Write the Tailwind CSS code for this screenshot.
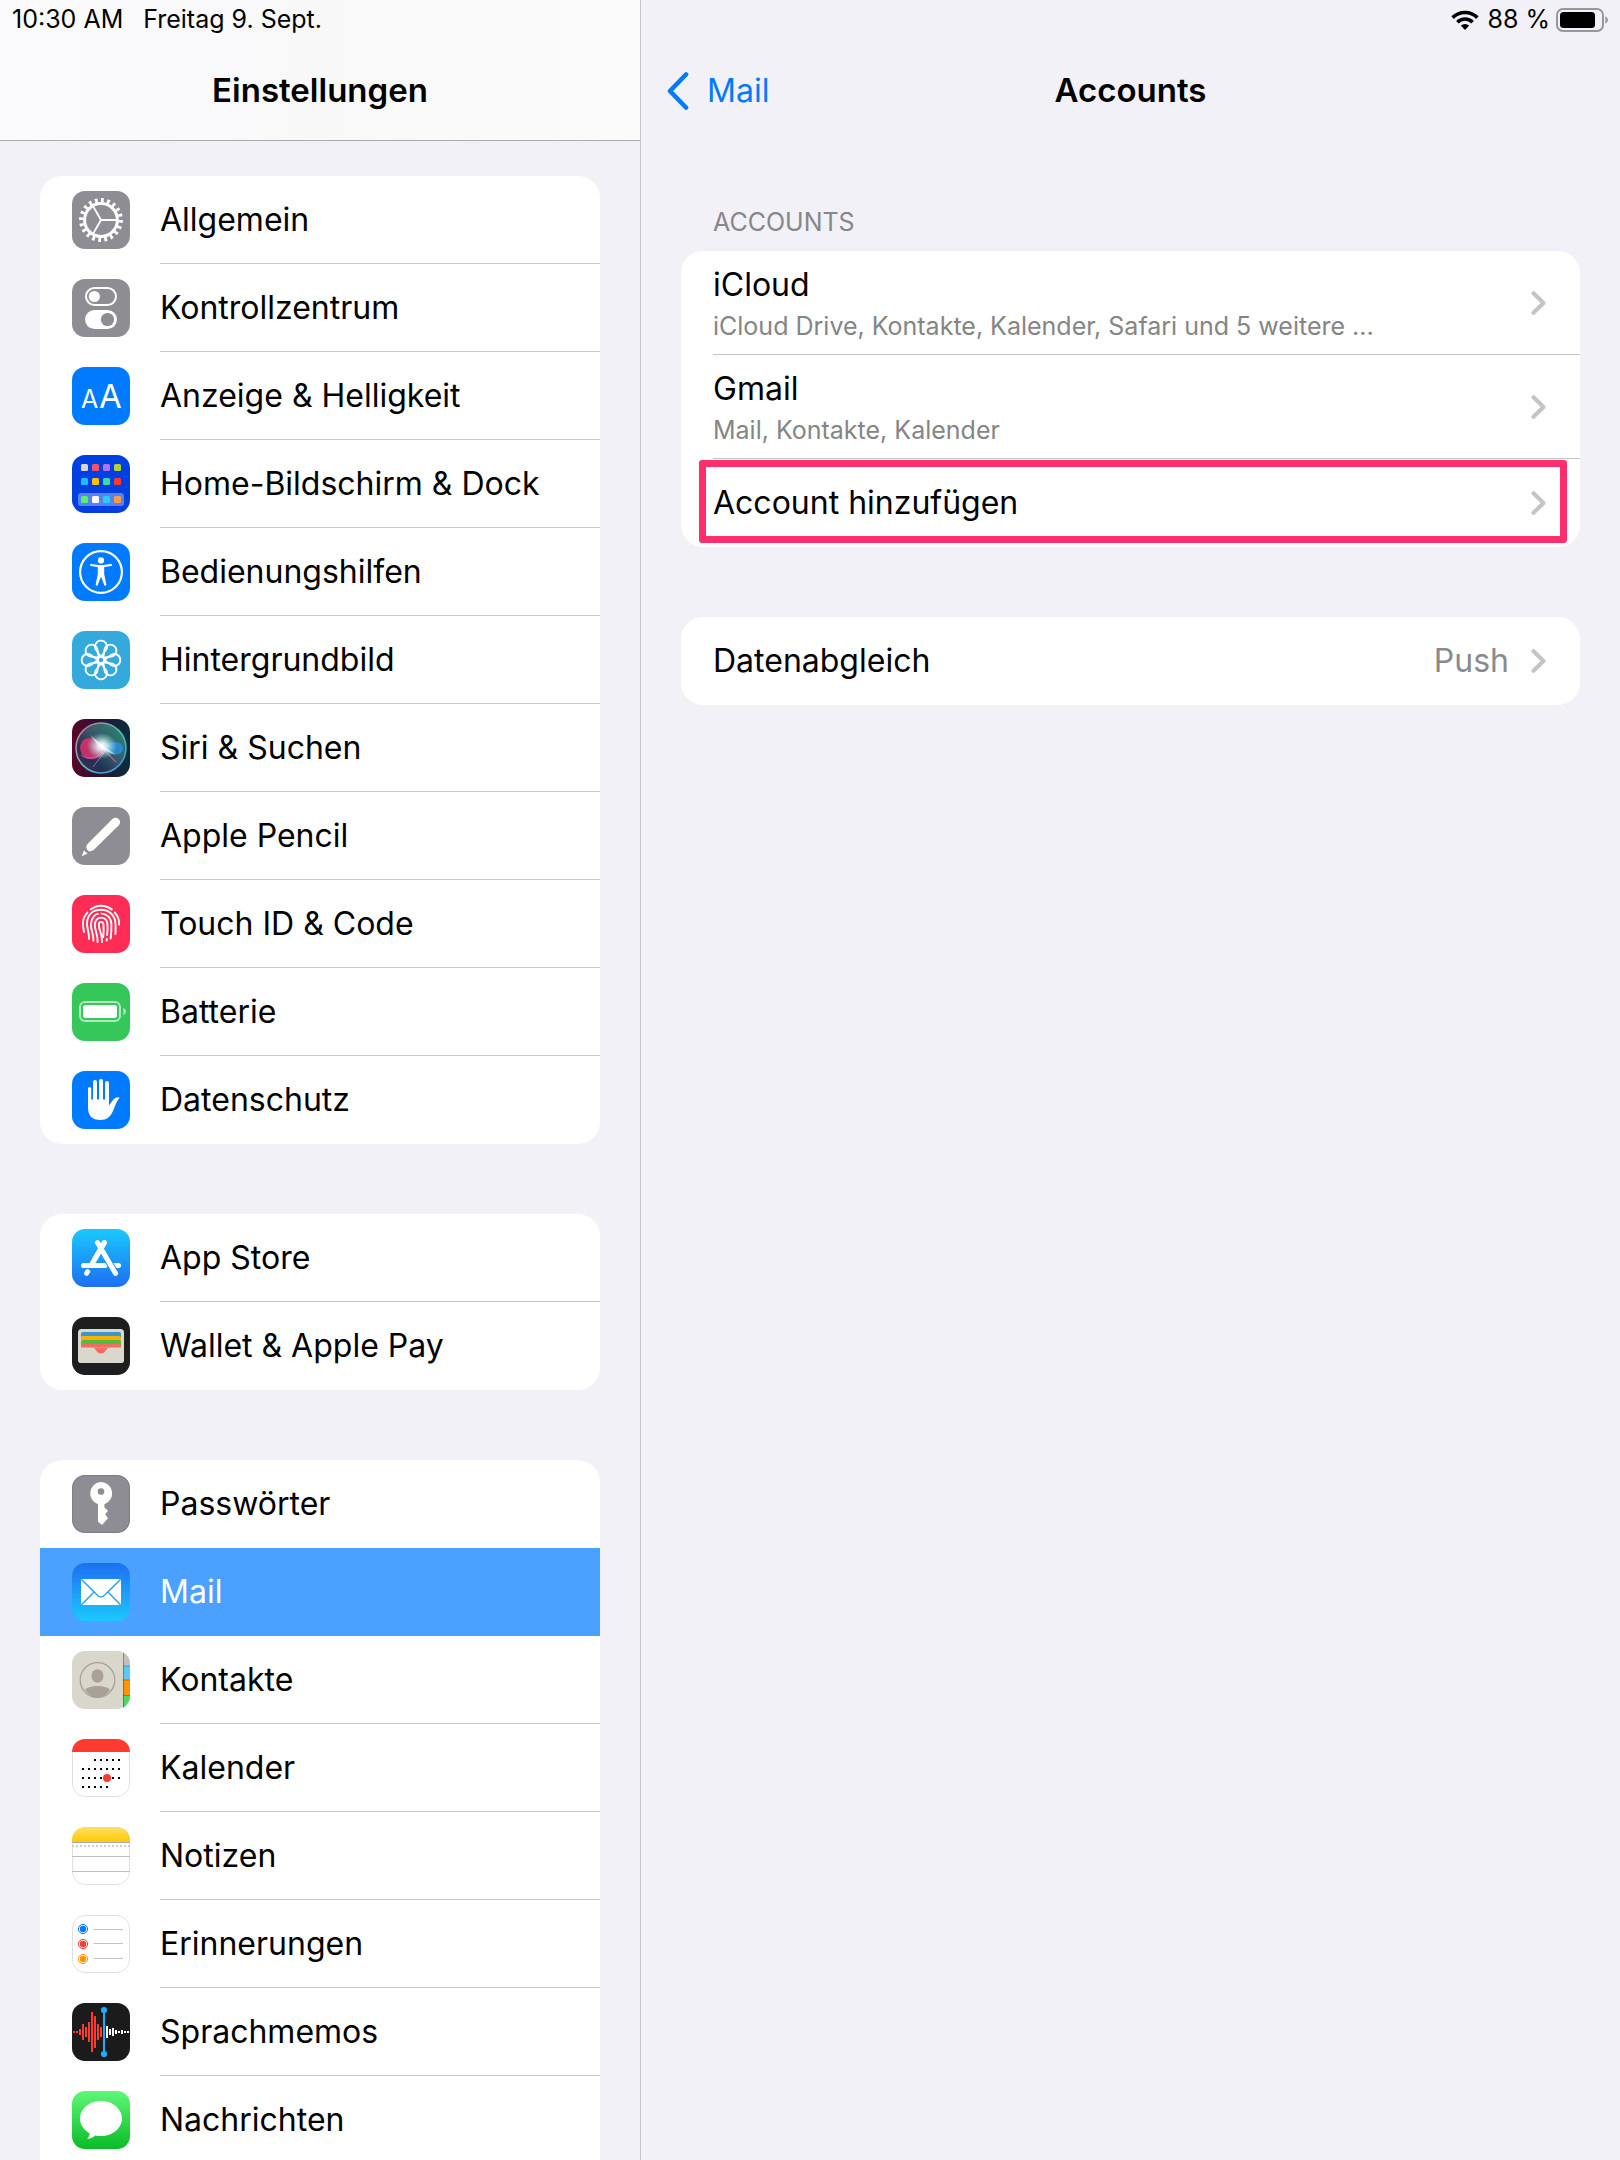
<!DOCTYPE html>
<html lang="de">

<head>
    <meta charset="UTF-8">
    <meta name="viewport" content="width=device-width, initial-scale=1.0">
    <script src="https://cdn.jsdelivr.net/npm/@tailwindcss/browser@4"></script>
    <title>Einstellungen</title>
</head>

<body class="bg-[#f2f1f7] text-black font-[Inter,'Liberation_Sans',sans-serif]">
    <div class="flex h-screen overflow-hidden">

        <!-- sidebar -->
        <aside class="flex flex-col w-2/5 max-w-[641px] border-r border-[#c6c5ca]">
            <header class="shrink-0 h-[141px] border-b border-[#a9a9ae] bg-linear-to-r from-[#fbfbfd] via-[#f8f8f9] to-[#fbfbfb]">
                <div class="flex items-center gap-5 h-10 px-3 text-[25px]">
                    <span>10:30 AM</span>
                    <span>Freitag 9. Sept.</span>
                </div>
                <h1 class="h-[100px] leading-[100px] text-center text-[33px] font-semibold">Einstellungen</h1>
            </header>
            <nav id="menu" class="flex-1 overflow-y-auto [scrollbar-width:none] px-10 pt-[35px] space-y-[70px]"></nav>
        </aside>

        <!-- detail -->
        <main class="flex-1 min-w-0">
            <div class="flex items-center justify-end gap-2 h-10 pr-3 text-[25px]">
                <svg class="w-7 h-5" viewBox="0 0 28 20" fill="none" stroke="#000" stroke-width="3.6">
                    <path d="M1.6 7.6A17.6 17.6 0 0 1 26.4 7.6" />
                    <path d="M6.4 12.2A10.8 10.8 0 0 1 21.6 12.2" />
                    <path d="M14 20L9.8 15.6A6 6 0 0 1 18.2 15.6Z" fill="#000" stroke="none" />
                </svg>
                <div class="flex items-center gap-1.5">
                    <span>88 %</span>
                    <svg class="w-[52px] h-6" viewBox="0 0 52 24" fill="none">
                        <rect x="1" y="1" width="46" height="22" rx="6" stroke="#98979c" stroke-width="2" />
                        <rect x="4" y="4" width="35" height="16" rx="3.5" fill="#000" />
                        <path d="M49.3 8.2Q52 9.5 52 12T49.3 15.8Z" fill="#98979c" />
                    </svg>
                </div>
            </div>
            <div class="grid grid-cols-[1fr_auto_1fr] items-center h-[102px] px-[26px]">
                <a href="#" class="flex items-center gap-[18px] text-[32px] text-[#007aff]">
                    <svg class="w-[22px] h-10" viewBox="0 0 22 40" fill="none" stroke="#007aff" stroke-width="4.6" stroke-linecap="round" stroke-linejoin="round">
                        <path d="M19 3.5L3 20L19 36.5" />
                    </svg>
                    Mail
                </a>
                <h2 class="text-[33px] font-semibold">Accounts</h2>
            </div>

            <section class="px-10 pt-[60px]">
                <h3 class="pl-8 h-[49px] leading-10 text-[25px] text-[#86868b]">ACCOUNTS</h3>
                <ul id="accounts" class="bg-white rounded-[22px]"></ul>
                <ul class="bg-white rounded-[22px] mt-[70px]">
                    <li>
                        <a href="#" class="flex items-center h-[88px] leading-[88px] pl-8 pr-[34px] text-[32px]">
                            <span class="flex-1">Datenabgleich</span>
                            <span class="text-[#8a8a8e] mr-[22px]">Push</span>
                            <svg class="w-[15px] h-6" viewBox="0 0 15 24" fill="none" stroke="#c4c4c6" stroke-width="4" stroke-linecap="round" stroke-linejoin="round">
                                <path d="M2.5 2.2L12.5 12L2.5 21.8" />
                            </svg>
                        </a>
                    </li>
                </ul>
            </section>
        </main>
    </div>

    <script>
        // every icon is drawn on a 58x58 tile
        const icons = {
            allgemein: `<rect width="58" height="58" fill="#8e8d93"/>
                <g fill="none" stroke="#fff">
                    <circle cx="29" cy="29" r="16.4" stroke-width="3"/>
                    <circle cx="29" cy="29" r="19.6" stroke-width="4.6" pathLength="80" stroke-dasharray="1.8 2.2"/>
                    <path d="M45 29H29L21 15.1M29 29L21 42.9" stroke-width="1.9"/>
                </g>`,
            kontroll: `<rect width="58" height="58" fill="#8e8d93"/>
                <rect x="14" y="9" width="30" height="17" rx="8.5" fill="none" stroke="#fff" stroke-width="2"/>
                <circle cx="22.3" cy="17.5" r="5.6" fill="#fff"/>
                <rect x="13" y="31" width="32" height="19" rx="9.5" fill="#fff"/>
                <circle cx="35.5" cy="40.5" r="6.6" fill="#8e8d93"/>`,
            anzeige: `<rect width="58" height="58" fill="#007aff"/>
                <text x="9" y="41" font-size="25" fill="#fff">A</text>
                <text x="27" y="41" font-size="33" fill="#fff">A</text>`,
            home: `<rect width="58" height="58" fill="#0040e0"/>
                <rect x="6" y="38" width="46" height="13" rx="3" fill="#fff" fill-opacity=".35"/>
                <rect x="9" y="9" width="7" height="7" rx="1.5" fill="#d9d6d0"/><rect x="20" y="9" width="7" height="7" rx="1.5" fill="#ff4f63"/>
                <rect x="31" y="9" width="7" height="7" rx="1.5" fill="#b76fff"/><rect x="42" y="9" width="7" height="7" rx="1.5" fill="#b2d235"/>
                <rect x="9" y="23" width="7" height="7" rx="1.5" fill="#1cbcff"/><rect x="20" y="23" width="7" height="7" rx="1.5" fill="#ffc200"/>
                <rect x="31" y="23" width="7" height="7" rx="1.5" fill="#3ddba6"/><rect x="42" y="23" width="7" height="7" rx="1.5" fill="#ff3830"/>
                <rect x="9" y="41" width="7" height="7" rx="1.5" fill="#55f26f"/><rect x="20" y="41" width="7" height="7" rx="1.5" fill="#fff"/>
                <rect x="31" y="41" width="7" height="7" rx="1.5" fill="#1fd0ff"/><rect x="42" y="41" width="7" height="7" rx="1.5" fill="#ff9b42"/>`,
            bedienung: `<rect width="58" height="58" fill="#007aff"/>
                <circle cx="29" cy="29" r="20.9" fill="none" stroke="#fff" stroke-width="2.2"/>
                <circle cx="29" cy="17.4" r="3.1" fill="#fff"/>
                <path d="M19 22L26.5 23.2H31.5L39 22" fill="none" stroke="#fff" stroke-width="2.2" stroke-linecap="round" stroke-linejoin="round"/>
                <path d="M25.8 23H32.2V31L34.4 41.8Q33.6 43.4 32.4 42.4L29.4 34.5H28.6L25.6 42.4Q24.4 43.4 23.6 41.8L25.8 31Z" fill="#fff"/>`,
            hintergrund: `<rect width="58" height="58" fill="#34aadc"/>
                <g fill="none" stroke="#fff" stroke-width="1.8" stroke-linejoin="round">
                    <circle cx="29" cy="29" r="3.2"/>
                    ${[0, 45, 90, 135, 180, 225, 270, 315].map(a => `<path transform="rotate(${a} 29 29)" d="M29 25.8L23.7 18.5A6 6 0 1 1 34.3 18.5Z"/>`).join('')}
                </g>`,
            siri: `<defs>
                    <linearGradient id="s1"><stop stop-color="#5c0526"/><stop offset=".45" stop-color="#2b1236"/><stop offset="1" stop-color="#062f3c"/></linearGradient>
                    <linearGradient id="s2" x1="1" y1="0" x2="0" y2="1"><stop stop-color="#2fae86"/><stop offset=".45" stop-color="#3b6f7c"/><stop offset=".7" stop-color="#1d3a5c"/><stop offset="1" stop-color="#4d2a6e"/></linearGradient>
                    <linearGradient id="s3" x1="0" y1="0" x2="1" y2="1"><stop stop-color="#e0668c"/><stop offset=".5" stop-color="#54c4ae"/><stop offset="1" stop-color="#3f83d8"/></linearGradient>
                    <radialGradient id="s4"><stop stop-color="#fff"/><stop offset=".3" stop-color="#e9fbff" stop-opacity=".85"/><stop offset="1" stop-color="#9fe" stop-opacity="0"/></radialGradient>
                </defs>
                <rect width="58" height="58" fill="url(#s1)"/>
                <circle cx="29" cy="29" r="25" fill="url(#s2)" fill-opacity=".75" stroke="url(#s3)" stroke-width="1.6"/>
                <path d="M8 29C9 16 24 15 34 31C28 44 9 43 8 29Z" fill="#e8326f" fill-opacity=".8"/>
                <path d="M9 36C16 42 26 39 34 31L21 48" fill="none" stroke="#b58be0" stroke-width="1" stroke-opacity=".7"/>
                <path d="M30 30C36 22 48 20 51 28C52 38 38 37 30 30Z" fill="#2b8fe8" fill-opacity=".8"/>
                <path d="M32 31L44 43" stroke="#e76a8f" stroke-width="1.4" stroke-opacity=".7"/>
                <ellipse cx="30" cy="27" rx="15" ry="13" fill="url(#s4)"/>
                <path d="M18 16L31.5 27L44 36L29 30Z" fill="#fff" fill-opacity=".6"/>`,
            pencil: `<rect width="58" height="58" fill="#8e8d93"/>
                <path d="M40.4 12.1A4.4 4.4 0 0 1 46.8 18.3L22.2 42.6Q20.5 44.3 17.6 44.6Q14.6 43.2 14.2 40.6Q14.4 38.2 16 36.5Z" fill="#fff"/>
                <path d="M9.8 49.3L12 43.3Q13.2 45.4 15.6 46.4Z" fill="#fff"/>`,
            touch: `<rect width="58" height="58" fill="#ff2d55"/>
                <g fill="none" stroke="#fff" stroke-width="1.9" stroke-linecap="round">
                    <path d="M18.6 14.4Q29 7.2 39.8 14.4M15.4 17.6C9.4 24 10.8 31 12 37M42.8 17.6C46.4 21.6 47.4 26 47.1 29.6"/>
                    <path d="M17 44C17.4 37 14.4 33 15 27C16 18.6 22 14.8 29 14.8C37 14.8 43.2 20 43.5 29C43.8 33 43.5 36 43.4 39"/>
                    <path d="M21.4 45.8C21.8 39 18.6 35 18.9 29C19.3 22.4 24 18.7 26 18.9M29.5 18.6C35 18.8 39.2 22.8 39.4 29C39.6 35 39.2 39 38.6 43.6"/>
                    <path d="M25.6 47C26 40 22.8 35 22.8 30C22.8 25.6 25.5 22.6 29 22.6C32.9 22.6 35.4 25.6 35.5 30C35.8 35 35.4 38 35.1 40M34.8 44L34.6 45.6"/>
                    <path d="M30 47C30.6 39 26.8 35 26.8 30C26.8 25.8 31.4 25.8 31.5 30C31.8 35 31.6 39 31.2 42"/>
                </g>`,
            batterie: `<rect width="58" height="58" fill="#35c759"/>
                <rect x="8" y="19" width="40" height="19" rx="5" fill="none" stroke="#fff" stroke-opacity=".6" stroke-width="2"/>
                <rect x="11" y="22" width="34" height="13" rx="2.5" fill="#fff"/>
                <path d="M51.3 24.8Q54 26 54 28.5T51.3 32.2Z" fill="#fff" fill-opacity=".6"/>`,
            datenschutz: `<rect width="58" height="58" fill="#007aff"/>
                <g stroke="#fff" stroke-linecap="round">
                    <path d="M17.6 17.5V36" stroke-width="3.2"/>
                    <path d="M23 11V34M29 10V34M35 12V34" stroke-width="4"/>
                </g>
                <path d="M16 28.5H37V34.5L40.5 29.5Q43.5 25.6 47.3 26.4Q47.6 27 46.6 28Q44.6 30.4 43 35L41 40Q37.5 49 28.5 49Q16 49 16 36.5Z" fill="#fff"/>`,
            appstore: `<defs><linearGradient id="as" x2="0" y2="1"><stop stop-color="#1bc9fd"/><stop offset="1" stop-color="#1d6ff2"/></linearGradient></defs>
                <rect width="58" height="58" fill="url(#as)"/>
                <g fill="none" stroke="#fff" stroke-width="5" stroke-linecap="round">
                    <path d="M11.5 36.5H33M42 36.5H46.5"/>
                    <path d="M32.4 13.6L19.6 35.5M15.6 42.6L14.6 44.4"/>
                </g>
                <path d="M25.4 13.6L43.6 44.4" stroke="#1e97f8" stroke-width="7" stroke-dasharray="20 30" stroke-dashoffset="-12"/>
                <path d="M25.4 13.6L43.6 44.4M32.4 13.6L22.6 30.4" stroke="#fff" stroke-width="5" stroke-linecap="round"/>`,
            wallet: `<rect width="58" height="58" fill="#1e1e1e"/>
                <rect x="6" y="12" width="46" height="34" rx="3.5" fill="#dad7cc"/>
                <path d="M9 31V17Q9 15 11 15H47Q49 15 49 17V31Z" fill="#3a99c9"/>
                <path d="M9 31V21Q9 19 11 19H47Q49 19 49 21V31Z" fill="#ffb003"/>
                <path d="M9 31V25Q9 23 11 23H47Q49 23 49 25V31Z" fill="#50be3d"/>
                <path d="M9 32V29Q9 27 11 27H47Q49 27 49 29V32Z" fill="#f26d5f"/>
                <path d="M6 30.5H52V42.5Q52 46 48.5 46H9.5Q6 46 6 42.5Z" fill="#dad7cc"/>
                <path d="M20 30.5C24.5 30.5 24 36.6 29 36.6S33.5 30.5 38 30.5Z" fill="#f26d5f"/>`,
            passwort: `<rect width="58" height="58" fill="#8e8d93"/>
                <rect x=".5" y=".5" width="57" height="57" rx="12.5" fill="none" stroke="#7d7c82"/>
                <path fill-rule="evenodd" d="M29 7A11.4 11.4 0 0 1 32.4 29.2V32.5L36 35.7L33.2 39.2L36 43.2L30 50L26 46.8V29.2A11.4 11.4 0 0 1 29 7ZM29 13.3A3.3 3.3 0 1 0 29 19.9A3.3 3.3 0 1 0 29 13.3Z" fill="#fff"/>`,
            mail: `<defs><linearGradient id="ma" x2="0" y2="1"><stop stop-color="#1d6ff2"/><stop offset="1" stop-color="#1bc9fd"/></linearGradient></defs>
                <rect width="58" height="58" fill="url(#ma)"/>
                <rect x="9" y="16" width="40" height="26" rx="1.2" fill="#fff"/>
                <path d="M9.5 16.5L24 30.8Q29 36.8 34 30.8L48.5 16.5M9.5 41.7L21.6 29.5M48.5 41.7L36.4 29.5" fill="none" stroke="#1e9cf8" stroke-width="1.3"/>`,
            kontakte: `<rect width="58" height="58" fill="#d9d6cc"/>
                <rect x="51" width="7" height="15" fill="#c4c0b8"/><rect x="51" y="15" width="7" height="14" fill="#5ac8fa"/>
                <rect x="51" y="29" width="7" height="15.5" fill="#ff9500"/><rect x="51" y="44.5" width="7" height="13.5" fill="#4cd964"/>
                <path d="M51.5 0V58M51 15H58M51 29H58M51 44.5H58" stroke="#000" stroke-opacity=".3" stroke-width="1"/>
                <circle cx="25.5" cy="29" r="17.3" fill="none" stroke="#a9a199" stroke-width="1.3"/>
                <ellipse cx="25.5" cy="25" rx="6" ry="6.8" fill="#a9a199"/>
                <path d="M13 38.5Q17 35 25.5 35T38 38.5Q33 46.5 25.5 46.5T13 38.5Z" fill="#a9a199"/>`,
            kalender: `<rect width="58" height="58" fill="#fff"/>
                <rect x=".5" y=".5" width="57" height="57" rx="12.5" fill="none" stroke="#e0e0e0"/>
                <rect width="58" height="13" fill="#ff3b30"/>
                <path d="M22 21H48M10 30H48M10 39H48M10 48H36" stroke="#000" stroke-width="2" stroke-dasharray="2 4"/>
                <circle cx="35" cy="39" r="4" fill="#ff3b30"/>`,
            notizen: `<defs><linearGradient id="no" x2="0" y2="1"><stop stop-color="#ffdf63"/><stop offset="1" stop-color="#ffcb05"/></linearGradient></defs>
                <rect width="58" height="58" fill="#fff"/>
                <rect x=".5" y=".5" width="57" height="57" rx="12.5" fill="none" stroke="#e0e0e0"/>
                <rect width="58" height="15" fill="url(#no)"/>
                <path d="M0 15.5H58" stroke="#a9a9a9"/>
                <path d="M0 19H58" stroke="#cfcfcf" stroke-width="2" stroke-dasharray="2 2"/>
                <path d="M0 29.5H58M0 44.5H58" stroke="#bfbfbf"/>`,
            erinnerungen: `<rect width="58" height="58" fill="#fff"/>
                <rect x=".5" y=".5" width="57" height="57" rx="12.5" fill="none" stroke="#dfdfe1"/>
                <g fill="none" stroke-width="1"><circle cx="11" cy="14" r="4.6" stroke="#007aff"/><circle cx="11" cy="29" r="4.6" stroke="#ff3b30"/><circle cx="11" cy="44" r="4.6" stroke="#ff9500"/></g>
                <circle cx="11" cy="14" r="3.2" fill="#007aff"/><circle cx="11" cy="29" r="3.2" fill="#ff3b30"/><circle cx="11" cy="44" r="3.2" fill="#ff9500"/>
                <path d="M21.5 14.5H51M21.5 28.5H51M21.5 43.5H51" stroke="#c2c2c4"/>`,
            sprachmemos: `<rect width="58" height="58" fill="#1b1b1b"/>
                <path d="M2 28V30M5 28V30M8 26V32M11 21V37M14 24V34M17 19V39M20 9V49M23 13V45M26 21V37M29 24V34" stroke="#ff3b30" stroke-width="2"/>
                <path d="M35 23V35M38 26V32M41 25V33M44 27V31M47 28V30M50 27V31M53 28V30M56 28V30" stroke="#fff" stroke-width="2"/>
                <path d="M32 7V51" stroke="#1badf8" stroke-width="2"/>
                <circle cx="32" cy="7" r="3.1" fill="#1badf8"/><circle cx="32" cy="51" r="3.1" fill="#1badf8"/>`,
            nachrichten: `<defs><linearGradient id="na" x2="0" y2="1"><stop stop-color="#5ff777"/><stop offset="1" stop-color="#0abb28"/></linearGradient></defs>
                <rect width="58" height="58" fill="url(#na)"/>
                <path d="M29 10C40.6 10 50 17.8 50 27.5S40.6 45 29 45Q26 45 23.4 44.4Q20 47.4 15.2 48Q17.8 45.2 17.7 42.4C12 39.2 8 33.8 8 27.5C8 17.8 17.4 10 29 10Z" fill="#fff"/>`
        };

        const groups = [
            [
                ['allgemein', 'Allgemein'],
                ['kontroll', 'Kontrollzentrum'],
                ['anzeige', 'Anzeige & Helligkeit'],
                ['home', 'Home-Bildschirm & Dock'],
                ['bedienung', 'Bedienungshilfen'],
                ['hintergrund', 'Hintergrundbild'],
                ['siri', 'Siri & Suchen'],
                ['pencil', 'Apple Pencil'],
                ['touch', 'Touch ID & Code'],
                ['batterie', 'Batterie'],
                ['datenschutz', 'Datenschutz']
            ],
            [
                ['appstore', 'App Store'],
                ['wallet', 'Wallet & Apple Pay']
            ],
            [
                ['passwort', 'Passwörter'],
                ['mail', 'Mail'],
                ['kontakte', 'Kontakte'],
                ['kalender', 'Kalender'],
                ['notizen', 'Notizen'],
                ['erinnerungen', 'Erinnerungen'],
                ['sprachmemos', 'Sprachmemos'],
                ['nachrichten', 'Nachrichten']
            ]
        ];
        const active = 'mail';

        document.querySelector('#menu').innerHTML = groups.map(group => `
            <ul class="bg-white rounded-[22px] last:rounded-b-none overflow-hidden">
                ${group.map(([id, label], i) => {
                    // no line next to the selected row or under the last one
                    const line = i < group.length - 1 && id != active && group[i + 1][0] != active;
                    return `<li>
                        <a href="#" class="flex items-center h-[88px] pl-8 gap-[30px] ${id == active ? 'bg-[#4ba1ff] text-white' : ''}">
                            <svg class="shrink-0 size-[58px] rounded-[13px]" viewBox="0 0 58 58">${icons[id]}</svg>
                            <span class="flex-1 h-[88px] leading-[88px] text-[32px] whitespace-nowrap ${line ? 'border-b border-[#c6c6c8]' : ''}">${label.replace('&', '&amp;')}</span>
                        </a>
                    </li>`;
                }).join('')}
            </ul>`).join('');

        const accounts = [
            { name: 'iCloud', info: 'iCloud Drive, Kontakte, Kalender, Safari und 5 weitere ...' },
            { name: 'Gmail', info: 'Mail, Kontakte, Kalender' },
            { name: 'Account hinzufügen', marked: true }
        ];

        document.querySelector('#accounts').innerHTML = accounts.map((acc, i) => `
            <li class="relative pl-8">
                <a href="#" class="flex items-center pr-[34px] ${acc.info ? 'h-[104px]' : 'h-[88px]'} ${i < accounts.length - 1 ? 'border-b border-[#c6c6c8]' : ''}">
                    <span class="flex-1 min-w-0 ${acc.info ? 'pt-0.5' : ''}">
                        <span class="block text-[32px] leading-[44px]">${acc.name}</span>
                        ${acc.info ? `<span class="block text-[25px] leading-[38px] text-[#858585] truncate">${acc.info}</span>` : ''}
                    </span>
                    <svg class="w-[15px] h-6" viewBox="0 0 15 24" fill="none" stroke="#c4c4c6" stroke-width="4" stroke-linecap="round" stroke-linejoin="round">
                        <path d="M2.5 2.2L12.5 12L2.5 21.8"/>
                    </svg>
                </a>
                ${acc.marked ? '<span class="absolute top-px bottom-1 left-[18px] right-[13px] border-[7px] border-[#ff2f6d] rounded-[3px] pointer-events-none"></span>' : ''}
            </li>`).join('');
    </script>
</body>

</html>
